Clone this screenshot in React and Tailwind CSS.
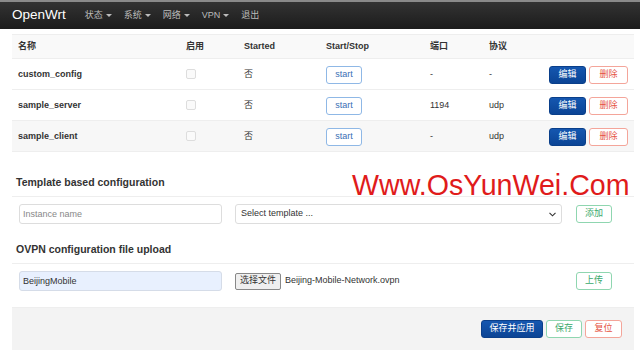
import React from 'react';

const font = "font-['Liberation_Sans','Noto_Sans_CJK_SC',sans-serif]";

const rows = [
    { name: 'custom_config', port: '-', proto: '-', bg: 'bg-white' },
    { name: 'sample_server', port: '1194', proto: 'udp', bg: 'bg-white' },
    { name: 'sample_client', port: '-', proto: 'udp', bg: 'bg-[#f7f7f7]' },
];

const cols = 'grid grid-cols-[168px_58px_82px_104px_59px_60px_1fr] items-center pl-[6px]';

const App = () => {
    return (
        <div className={`${font} w-[640px] h-[351px] bg-white overflow-hidden text-[#333]`}>
            {/* Top bar */}
            <div className="h-[29px] border-t-2 border-[#8a8a8a] bg-gradient-to-b from-[#333333] to-[#1c1c1c] flex items-center px-3">
                <span className="text-white text-[13.5px] mr-[19px]">OpenWrt</span>
                <nav className="flex items-center gap-[12px] text-[9px] text-[#bbb]">
                    {['状态', '系统', '网络', 'VPN'].map((m) => (
                        <span key={m} className="flex items-center gap-[3px]">
                            {m}
                            <span className="inline-block w-0 h-0 border-l-[3px] border-r-[3px] border-t-[3px] border-l-transparent border-r-transparent border-t-[#bbb]" />
                        </span>
                    ))}
                    <span>退出</span>
                </nav>
            </div>

            <div className="relative ml-3 w-[622px]">
                {/* Table */}
                <div className="mt-[5px]">
                    <div className={`${cols} h-[25px] bg-[#f9f9f9] border-y border-[#eee] text-[9px] font-bold`}>
                        <span>名称</span>
                        <span>启用</span>
                        <span>Started</span>
                        <span>Start/Stop</span>
                        <span>端口</span>
                        <span>协议</span>
                        <span />
                    </div>
                    {rows.map((r) => (
                        <div key={r.name} className={`${cols} h-[31px] pt-[2px] border-b border-[#eee] text-[9px] ${r.bg}`}>
                            <span className="font-bold">{r.name}</span>
                            <span>
                                <span className="block w-[10px] h-[10px] border border-[#ddd] rounded-[2px] bg-[#fafafa] -mt-[3px]" />
                            </span>
                            <span>否</span>
                            <span>
                                <button className="w-[36px] h-[18px] border border-[#8fb8e6] rounded-[3px] bg-white text-[#3a6fb5] text-[9px]">start</button>
                            </span>
                            <span>{r.port}</span>
                            <span>{r.proto}</span>
                            <span className="flex justify-end gap-[3px] pr-[6px]">
                                <button className="w-[37px] h-[18px] rounded-[3px] bg-gradient-to-b from-[#1557b0] to-[#0b4495] border border-[#0a3f8a] text-white text-[9px]">编辑</button>
                                <button className="w-[39px] h-[18px] rounded-[3px] bg-white border border-[#f4a59a] text-[#e5533f] text-[9px]">删除</button>
                            </span>
                        </div>
                    ))}
                </div>

                {/* Template section */}
                <div className="mt-[22px] px-[4px] text-[10.5px] font-bold h-[22px] leading-[16px]">Template based configuration</div>
                <div className="border-t border-[#eee] pt-[7px] pb-[7px] flex items-center">
                    <input
                        placeholder="Instance name"
                        className="ml-[7px] w-[203px] h-[20px] border border-[#ddd] rounded-[3px] px-[3px] text-[9px] placeholder:text-[#888] outline-none"
                    />
                    <div className="ml-[13px] w-[327px] h-[20px] border border-[#ddd] rounded-[3px] flex items-center justify-between px-[5px] text-[9px]">
                        <span>Select template ...</span>
                        <svg width="7" height="5" viewBox="0 0 7 5"><path d="M0.5 0.8 L3.5 3.8 L6.5 0.8" fill="none" stroke="#333" strokeWidth="1.1" /></svg>
                    </div>
                    <button className="ml-[14px] w-[36px] h-[18px] border border-[#8fd6b0] rounded-[3px] text-[#3aa96c] text-[9px] bg-white">添加</button>
                </div>

                {/* OVPN upload */}
                <div className="mt-[10px] px-[4px] text-[10.5px] font-bold h-[22px] leading-[16px]">OVPN configuration file upload</div>
                <div className="border-t border-[#eee] pt-[7px] flex items-center">
                    <input
                        defaultValue="BeijingMobile"
                        className="ml-[7px] w-[203px] h-[20px] border border-[#d5dce8] rounded-[3px] px-[3px] text-[9px] bg-[#e8f0fe] outline-none"
                    />
                    <div className="ml-[13px] flex items-center text-[9px]">
                        <button className="h-[17px] px-[4px] border border-[#888] rounded-[2px] bg-[#efefef] text-[9px]">选择文件</button>
                        <span className="ml-[4px]">Beijing-Mobile-Network.ovpn</span>
                    </div>
                    <button className="ml-auto mr-[22px] w-[36px] h-[18px] border border-[#8fd6b0] rounded-[3px] text-[#3aa96c] text-[9px] bg-white">上传</button>
                </div>

                {/* Footer actions */}
                <div className="mt-[16px] h-[43px] bg-[#f3f3f3] border-t border-[#eee] flex items-center justify-end gap-[3px] pr-[12px]">
                    <button className="w-[62px] h-[18px] rounded-[3px] bg-gradient-to-b from-[#1557b0] to-[#0b4495] border border-[#0a3f8a] text-white text-[9px]">保存并应用</button>
                    <button className="w-[36px] h-[18px] rounded-[3px] bg-white border border-[#8fd6b0] text-[#3aa96c] text-[9px]">保存</button>
                    <button className="w-[37px] h-[18px] rounded-[3px] bg-white border border-[#f4a59a] text-[#e5533f] text-[9px]">复位</button>
                </div>

                {/* Watermark */}
                <div className="absolute left-[340px] top-[137px] text-[28.6px] leading-none text-[#e01b1b] pointer-events-none">
                    Www.OsYunWei.Com
                </div>
            </div>
        </div>
    );
};

export default App;
